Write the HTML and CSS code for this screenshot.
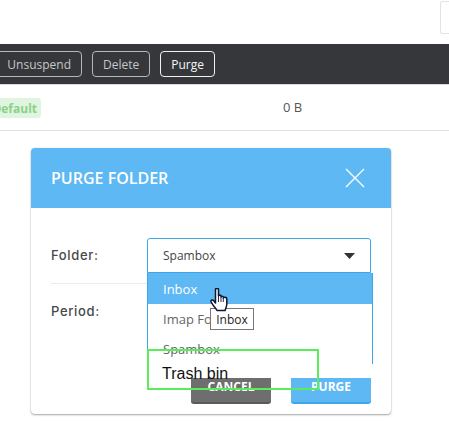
FILE: index.html
```html
<!DOCTYPE html>
<html lang="en">
<head>
<meta charset="utf-8">
<title>Purge folder</title>
<link rel="stylesheet" href="styles.css">
</head>
<body>
<div class="page">
  <header class="top"><div class="top-box"></div></header>
  <div class="toolbar">
    <button class="tool">Unsuspend</button>
    <button class="tool">Delete</button>
    <button class="tool active">Purge</button>
  </div>
  <div class="row">
    <div class="row-name"><span class="badge">Default</span></div>
    <div class="row-size">0 B</div>
  </div>
  <section class="modal">
    <div class="modal-head">
      <h2>PURGE FOLDER</h2>
      <svg class="close" width="20" height="20" viewBox="0 0 20 20"><path d="M1 1L19 19M19 1L1 19" stroke="#fff" stroke-width="1.3" fill="none"/></svg>
    </div>
    <div class="modal-body">
      <div class="field first">
        <label>Folder:</label>
        <div class="select">
          <span>Spambox</span>
          <svg width="11" height="6" viewBox="0 0 11 6"><path d="M0 0H11L5.5 6Z" fill="#333"/></svg>
        </div>
      </div>
      <div class="field">
        <label>Period:</label>
      </div>
      <div class="actions">
        <button class="btn cancel">CANCEL</button>
        <button class="btn purge">PURGE</button>
      </div>
      <div class="menu">
        <div class="opt hover">Inbox</div>
        <div class="opt">Imap Folder</div>
        <div class="opt">Spambox</div>
      </div>
      <div class="cover"></div>
      <div class="trash">Trash bin</div>
      <div class="tip">Inbox</div>
      <svg class="cursor" width="18" height="24" viewBox="0 0 18 24"><path d="M5.500 1.500C5.500 0 8.500 0 8.500 1.500V8C8.500 6.800 11 6.800 11 8V9C11 8 13.300 8 13.300 9V10C13.300 9 16.800 9 16.800 10.500V16C16.800 19 15.500 20 15.200 22.500H7C6 20 3 18 1.200 14C.6 12 2.400 11 4 13L5.500 15Z" fill="#fff" stroke="#0d1830" stroke-width="1.500" stroke-linejoin="round"/><path d="M8.500 8V14M11 9V14M13.300 10V14" stroke="#0d1830" stroke-width=".9"/></svg>
    </div>
  </section>
</div>
</body>
</html>
```

FILE: styles.css
```css
* { box-sizing: border-box; }
html, body { margin: 0; height: 100%; background: #fff; overflow: hidden; }
.page { width: 449px; height: 438px; overflow: hidden; font-family: "Open Sans", sans-serif; color: #444; }

.top { height: 44px; display: flex; justify-content: flex-end; padding-top: 1px; }
.top-box { width: 9px; height: 33px; border: 1px solid #e3e3e3; border-right: 0; border-radius: 3px 0 0 3px; }

.toolbar { height: 41px; background: #35373b; border-bottom: 1px solid #d9dadb; display: flex; justify-content: flex-end; align-items: flex-start; gap: 10px; padding: 7px 234px 0 0; }
.tool { height: 26px; padding: 0 10px; background: transparent; border: 1px solid #b5b6b8; border-radius: 4px; color: #c6c7c8; font: 12px "Open Sans", sans-serif; }
.tool.active { border-color: #f1f1f1; color: #f5f5f5; }

.row { height: 46px; border-bottom: 1px solid #e2e2e2; display: flex; align-items: center; }
.row-name { width: 283px; display: flex; justify-content: flex-end; padding-right: 242px; }
.badge { flex: none; background: #e0f5df; color: #8cd08c; font: 700 12px "Open Sans", sans-serif; padding: 2px 4px; border-radius: 3px; height: 20px; line-height: 17px; }
.row-size { font: 13px "Open Sans", sans-serif; color: #555; padding-bottom: 2px; }

.modal { width: 360px; height: 266px; margin: 17px 0 0 31px; border-radius: 4px; background: #fff; box-shadow: 0 1px 2px rgba(0,0,0,.35), 0 0 1px rgba(0,0,0,.2); display: flex; flex-direction: column; }
.modal-head { height: 60px; background: #5eb8f4; border-radius: 4px 4px 0 0; display: flex; align-items: center; justify-content: space-between; padding: 0 26px 0 20px; }
.modal-head h2 { margin: 0; color: #fff; font: 600 16px "Open Sans", sans-serif; }
.close { display: block; }

.modal-body { flex: 1; position: relative; padding: 30px 20px 0; }
.field { display: flex; align-items: center; }
.field.first { height: 46px; align-items: flex-start; border-bottom: 1px solid #ececec; }
.field label { width: 96px; font: 500 13px Inter, sans-serif; letter-spacing: .65px; color: #484848; line-height: 34px; }
.select { flex: 1; height: 35px; border: 1px solid #3fa6ea; border-radius: 3px 3px 0 0; display: flex; align-items: center; justify-content: space-between; padding: 0 15px; font: 12px "Open Sans", sans-serif; color: #444; }
.field:not(.first) { height: 54px; }
.actions { display: flex; justify-content: flex-end; gap: 20px; padding-top: 30px; }
.btn { width: 80px; height: 36px; border: 0; border-radius: 3px; color: #fff; font: 700 12px "Open Sans", sans-serif; padding: 2px 0 0; }
.cancel { background: #6e6e6e; border-bottom: 2px solid #5a5a5a; }
.purge { background: #5eb8f4; border-bottom: 2px solid #3fa6ea; }

.menu { position: absolute; left: 116px; top: 65px; width: 226px; height: 91px; background: #fff; border: solid #3fa6ea; border-width: 0 1px; font: 13px "Open Sans", sans-serif; color: #666; }
.opt { height: 30px; line-height: 30px; padding-left: 15px; }
.opt.hover { height: 31px; line-height: 33px; background: #5eb8f4; color: #fff; }
.cover { position: absolute; left: 116px; top: 156px; width: 228px; height: 14px; background: #fff; }
.trash { position: absolute; left: 116px; top: 141px; width: 172px; height: 41px; border: 2px solid #5aec5a; font: 16px/46px "Liberation Sans", sans-serif; color: #111; padding-left: 13px; }
.tip { position: absolute; left: 179px; top: 100px; width: 44px; height: 22px; border: 1px solid #777; background: #fff; color: #222; font: 12px/22px "Open Sans", sans-serif; text-align: center; }
.cursor { position: absolute; left: 179px; top: 80px; }
```
